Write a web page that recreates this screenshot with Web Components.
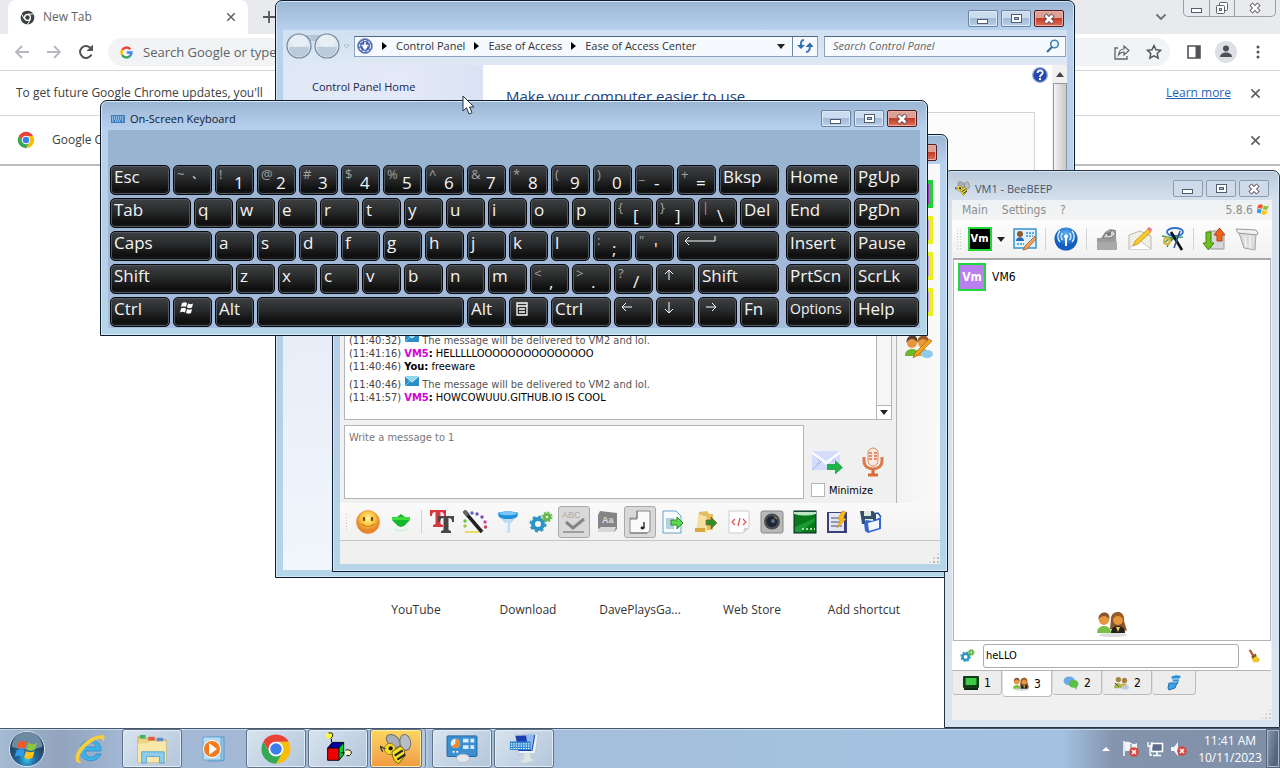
<!DOCTYPE html>
<html lang="en">
<head>
<meta charset="utf-8">
<title>Desktop</title>
<style>
  html, body { height: 100%; margin: 0; overflow: hidden; }
  body { font: 12px/16px "Open Sans", "Noto Sans", sans-serif; color: #000; background: #fff; }
</style>
</head>
<body>
<desk-top></desk-top>

<script>
const wheel = (a, b, c) => `
  <g><path fill="${a}" d="M2.5 6.5A11 11 0 0 1 21.5 6.5H12A5.5 5.5 0 0 0 7.2 14.8Z"/>
  <path fill="${b}" transform="rotate(120 12 12)" d="M2.5 6.5A11 11 0 0 1 21.5 6.5H12A5.5 5.5 0 0 0 7.2 14.8Z"/>
  <path fill="${c}" transform="rotate(240 12 12)" d="M2.5 6.5A11 11 0 0 1 21.5 6.5H12A5.5 5.5 0 0 0 7.2 14.8Z"/></g>`;

const flag = `
  <path fill="#f2592a" d="M2 4c3-2 6-2 9 0l-2 7c-3-2-6-2-9 0z"/>
  <path fill="#8cc63f" d="M12.5 4.5c3 2 6 2 9 0l-2 7c-3 2-6 2-9 0z"/>
  <path fill="#2f9be8" d="M0 12.5c3-2 6-2 8.5 0l-2 7c-3-2-5.5-2-8.5 0z"/>
  <path fill="#fcc419" d="M10 13c3 2 6 2 9 0l-2 7c-3 2-6 2-9 0z"/>`;

const person = (x, shirt, hair) => `
  <g transform="translate(${x} 0)"><path fill="${shirt}" d="M0 22c0-5 3-7 7-7s7 2 7 7z"/>
  <circle cx="7" cy="9" r="5" fill="#e8963e"/><path fill="${hair}" d="M1.5 9C1 4 4 1.5 7.5 1.5S13 4 12.5 9C11 6 9 5 7 5S3 6 1.5 9z"/></g>`;

const gears = `
  <circle cx="9" cy="14" r="5" fill="none" stroke="#2b95c4" stroke-width="4"/>
  <circle cx="9" cy="14" r="7.5" fill="none" stroke="#2b95c4" stroke-width="2" stroke-dasharray="3 2.900"/>
  <circle cx="18" cy="7" r="2.8" fill="none" stroke="#63b54e" stroke-width="3"/>
  <circle cx="18" cy="7" r="4.600" fill="none" stroke="#7ac05e" stroke-width="2" stroke-dasharray="2 1.600"/>`;

const bee = `
  <ellipse cx="10" cy="6" rx="6" ry="4" transform="rotate(40 10 6)" fill="#a9adb5" stroke="#6a6d74" stroke-width=".7"/>
  <ellipse cx="19" cy="7" rx="4" ry="6" transform="rotate(-10 19 7)" fill="#b9bcc3" stroke="#6a6d74" stroke-width=".7"/>
  <circle cx="7.5" cy="12" r="4.200" fill="#f4dc2c" stroke="#9a7c18" stroke-width=".7"/>
  <path d="M9 14l6-4c4 1 4 6 3 8l-4 5c-3-1-5-5-5-9z" fill="#f4dc2c" stroke="#665518" stroke-width=".7"/>
  <path d="M11 17l6-4M13 20l6-4" stroke="#222" stroke-width="1.600"/>
  <circle cx="8" cy="11.5" r="1.600" fill="#111"/><path d="M4 12l-4-2 2 4" fill="none" stroke="#333"/>`;

// name: [viewBox, markup]
const ICONS = {
  chrome: ["0 0 24 24", wheel("#ea4335", "#fbbc05", "#34a853") + `<circle cx="12" cy="12" r="5.5" fill="#fff"/><circle cx="12" cy="12" r="4.300" fill="#3b7ded"/>`],
  "chrome-mono": ["0 0 24 24", wheel("#3c4043", "#3c4043", "#3c4043") + `<path stroke="#fff" stroke-width="1.5" d="M12 6.5h9.5M7.2 14.8L2.5 6.5M16.8 14.8L12 23"/><circle cx="12" cy="12" r="5.5" fill="#fff"/><circle cx="12" cy="12" r="3.600" fill="#3c4043"/>`],
  google: ["0 0 24 24", `<g fill="none" stroke-width="4.400"><path stroke="#ea4335" d="M19 6A9.3 9.3 0 0 0 4.2 7.2"/><path stroke="#fbbc05" d="M4.2 7.2a9.3 9.3 0 0 0 0 9.600"/><path stroke="#34a853" d="M4.2 16.8A9.3 9.3 0 0 0 18 19"/><path stroke="#4285f4" d="M18 19a9 9 0 0 0 3.2-7H12.5"/></g>`],
  close: ["0 0 12 12", `<path d="M1.5 1.5l9 9M10.5 1.5l-9 9" stroke="#5a5d61" stroke-width="1.700"/>`],
  plus: ["0 0 12 12", `<path d="M6 0v12M0 6h12" stroke="#55585c" stroke-width="1.800"/>`],
  back: ["0 0 16 16", `<path d="M15 8H2M8 2L2 8l6 6" fill="none" stroke="#b5b8bc" stroke-width="1.800"/>`],
  forward: ["0 0 16 16", `<path d="M1 8h13M8 2l6 6-6 6" fill="none" stroke="#b5b8bc" stroke-width="1.800"/>`],
  reload: ["0 0 16 16", `<path d="M13.5 10.5A6 6 0 1 1 13 4.5" fill="none" stroke="#505357" stroke-width="2"/><path d="M15 .5V7H8.5z" fill="#505357"/>`],
  chevron: ["0 0 12 8", `<path d="M1.5 1.5L6 6l4.5-4.5" fill="none" stroke="#6b6e73" stroke-width="1.800"/>`],
  share: ["0 0 16 16", `<path d="M4 4H1v11h12v-3" fill="none" stroke="#5f6368" stroke-width="1.300"/><path d="M4.5 11C5 7 7 5 10 5V2l5 4.5-5 4.5V8C7.5 8 6 9 4.5 11z" fill="none" stroke="#5f6368" stroke-width="1.200"/>`],
  star: ["0 0 16 16", `<path d="M8 1.500l2 4.300 4.700.5-3.500 3.200 1 4.700L8 11.800l-4.200 2.400 1-4.700L1.300 6.300l4.700-.5z" fill="none" stroke="#505357" stroke-width="1.400"/>`],
  panel: ["0 0 16 16", `<path d="M2 2h12v12H2z" fill="none" stroke="#505357" stroke-width="1.600"/><path d="M9.5 2H14v12H9.5z" fill="#505357"/>`],
  profile: ["0 0 22 22", `<circle cx="11" cy="11" r="11" fill="#dde1e6"/><circle cx="11" cy="7.5" r="3" fill="#4d5156"/><path d="M5 16c0-3 3-4.500 6-4.500s6 1.500 6 4.500z" fill="#4d5156"/>`],
  dots: ["0 0 4 16", `<g fill="#505357"><circle cx="2" cy="3" r="1.500"/><circle cx="2" cy="8" r="1.500"/><circle cx="2" cy="13" r="1.500"/></g>`],
  min: ["0 0 14 12", `<rect x="1.5" y="6.5" width="10" height="4" fill="#fff" stroke="#4e5d72"/>`],
  max: ["0 0 14 12", `<rect x="2.5" y="1.5" width="10" height="8" fill="#fff" stroke="#4e5d72"/><rect x="5.5" y="4.5" width="4" height="2" fill="#a9c0da" stroke="#4e5d72"/>`],
  restore: ["0 0 14 14", `<rect x="4.5" y="1.5" width="8" height="8" rx="1" fill="#fff" stroke="#5b606a"/><rect x="1.5" y="4.5" width="8" height="8" rx="1" fill="#fff" stroke="#5b606a"/><rect x="4.5" y="7.5" width="2" height="2" fill="none" stroke="#5b606a"/>`],
  cross: ["0 0 14 12", `<path d="M3 2l8 8M11 2l-8 8" stroke="#5c4650" stroke-width="4.400"/><path d="M3.5 2.5l7 7M10.5 2.5l-7 7" stroke="#fff" stroke-width="2.600"/>`],
  kbd: ["0 0 14 8", `<rect width="14" height="8" fill="#3c7fc0"/><path d="M1 2h12M1 4h12M1 6h2M11 6h2M4 6h6" stroke="#d6ecff" stroke-width="1" stroke-dasharray="1.200 .8"/>`],
  orbnav: ["0 0 66 28", `<path d="M14 3h28v6H14z" fill="#b4c6d8"/><g stroke="#75879a" stroke-width="1.200" fill="#dce6ef"><circle cx="14" cy="14" r="12"/><circle cx="42" cy="14" r="12"/></g><g fill="#bccada"><path d="M4 15h20a10 10 0 0 1-20 0zM32 15h20a10 10 0 0 1-20 0z"/></g><g fill="#edf3f8" opacity=".7"><ellipse cx="14" cy="9" rx="9" ry="6"/><ellipse cx="42" cy="9" rx="9" ry="6"/></g><path d="M59 13h5l-2.500 3z" fill="#fff" stroke="#a9b8c8"/>`],
  ease: ["0 0 16 16", `<circle cx="8" cy="8" r="7.5" fill="#4461ad" stroke="#8d9cc0"/><circle cx="8" cy="8" r="5.5" fill="none" stroke="#dfe8ff" stroke-width="1.200" stroke-dasharray="3 1"/><path d="M8 4v6M4.5 7.5h7M6 8.5l2 2.500 2-2.500" fill="none" stroke="#fff" stroke-width="1.600"/>`],
  tri: ["0 0 5 8", `<path d="M0 0l5 4-5 4z" fill="#000"/>`],
  caret: ["0 0 8 5", `<path d="M0 0h8L4 5z" fill="#222"/>`],
  scrollup: ["0 0 8 5", `<path d="M0 5h8L4 0z" fill="#444"/>`],
  refresh: ["0 0 16 14", `<path d="M7 1C4 1 4 3 4 6M9 13c3 0 4-2 4-6" fill="none" stroke="#3a78b8" stroke-width="2"/><path d="M0 6h8L4 10zM8.5 8h8L13 3.500z" fill="#2f6fae"/>`],
  search: ["0 0 14 14", `<circle cx="8.5" cy="5" r="3.800" fill="#eaf6ff" stroke="#4383ad" stroke-width="1.600"/><path d="M6 8l-5 5" stroke="#376f99" stroke-width="2.200"/>`],
  pointer: ["0 0 14 21", `<path d="M1 1v15l3.500-3.300L7 19l3-1.300L7.500 12H12z" fill="#fff" stroke="#26303c"/>`],
  smiley: ["0 0 24 24", `<defs><radialGradient id="g" cy=".35"><stop offset="0" stop-color="#fff3a0"/><stop offset=".6" stop-color="#fbc43c"/><stop offset="1" stop-color="#e8862b"/></radialGradient></defs><circle cx="12" cy="12" r="11.500" fill="url(#g)" stroke="#e28a3a" stroke-width=".6"/><ellipse cx="8" cy="9" rx="1.200" ry="2.200" fill="#6b4a12"/><ellipse cx="16" cy="9" rx="1.200" ry="2.200" fill="#6b4a12"/><path d="M5.500 14q6.500 5 13 0" fill="none" stroke="#c98224" stroke-width="1.200"/>`],
  greendown: ["0 0 24 24", `<path d="M3 7h5l4-3 4 3h5v3l-6 6-3 1-3-1-6-6z" fill="#13b82c"/><path d="M3 7h18v3H3z" fill="#3fdc3f"/><path d="M5 18q7 3 14 0v2q-7 3-14 0z" fill="#d9f0d9"/>`],
  font: ["0 0 24 24", `<path d="M0 0h16v6h-2c0-3-1-4-3.500-4v12l2.500 1v2H3v-2l2.500-1V2C3 2 2 3 2 6H0z" fill="#d9373d"/><path d="M8 6h16v6h-2c0-3-1-4-3.500-4v12l2.500 1v2H11v-2l2.500-1V8C11 8 10 9 10 12H8z" fill="#4b4547"/>`],
  wand: ["0 0 24 24", `<path d="M1 1l18 21" stroke="#222" stroke-width="3.500"/><path d="M1 1l4 4" stroke="#666" stroke-width="4"/><g><circle cx="9" cy="3" r="1.700" fill="#5663c8"/><circle cx="14" cy="4" r="1.700" fill="#6a4fc0"/><circle cx="19" cy="7" r="1.700" fill="#8447b4"/><circle cx="22" cy="12" r="1.700" fill="#c44aa8"/><circle cx="22.500" cy="17" r="1.700" fill="#cf3d60"/><circle cx="2" cy="11" r="1.700" fill="#68c23a"/><circle cx="2" cy="16" r="1.700" fill="#9ccc3c"/></g><path d="M2 22h14" stroke="#e0d53a" stroke-width="1.500"/>`],
  funnel: ["0 0 24 24", `<path d="M2 3c3-2 17-2 20 0v3l-8 8v8l-4 1v-9L2 6z" fill="#bcdcf4"/><path d="M2 3c3-2 17-2 20 0l-1 4-5 2H8L3 7z" fill="#1e8fdc"/><ellipse cx="12" cy="3.500" rx="9" ry="1.800" fill="#79c5f5"/><path d="M11 12v10" stroke="#edf7ff" stroke-width="1.500"/>`],
  gears: ["0 0 24 24", gears],
  spell: ["0 0 24 24", `<text x="0" y="8" font-family="Liberation Sans" font-size="9" fill="#aaa">ABC</text><path d="M4 12l7 6 11-9" fill="none" stroke="#858585" stroke-width="3"/><path d="M1 22h21" stroke="#8a8a8a" stroke-width="1.500"/>`],
  book: ["0 0 24 24", `<path d="M5 1l17 2v16l-3 3H3V5z" fill="#858585"/><path d="M3 19l3-2h15l-2 5H3z" fill="#d8d8d8"/><text x="7" y="13" font-family="Liberation Sans" font-weight="bold" font-size="9" fill="#ddd">Aa</text>`],
  notepage: ["0 0 24 24", `<path d="M9 1h13v20l-3 2H2V8h7z" fill="#fafafa" stroke="#888"/><path d="M9 1v8H2" fill="none" stroke="#777"/><path d="M16 12v6" stroke="#222" stroke-width="1.300"/><ellipse cx="14.500" cy="18" rx="2" ry="1.400" fill="#222"/><path d="M2 23h17" stroke="#777"/>`],
  sendfile: ["0 0 24 24", `<path d="M2 1h13l5 5v17H2z" fill="#f5fbff" stroke="#6ba0c8"/><path d="M5 8h8v11H5z" fill="#b8cfe0"/><path d="M10 10h6V7l6 6-6 6v-4h-6z" fill="#5fd850" stroke="#2b8b2b"/>`],
  sendfolder: ["0 0 24 24", `<path d="M5 2l8-1 2 3h4v16H3z" fill="#e3bd62"/><path d="M3 20L5 4l8 3v16z" fill="#f6e0a0"/><path d="M1 18h10v4H1z" fill="#d9a83c"/><path d="M12 10h5V7l6 6-6 6v-4h-5z" fill="#2f8f2b" stroke="#8a5a20" stroke-width=".6"/>`],
  code: ["0 0 24 24", `<path d="M2 1h20v17l-6 5H2z" fill="#fff" stroke="#ccc"/><path d="M22 18h-5l-1 5z" fill="#d4d4d4"/><path d="M8 9l-3 3 3 3M16 9l3 3-3 3M13 8l-2 8" fill="none" stroke="#e05050" stroke-width="1.200"/>`],
  camera: ["0 0 24 24", `<rect x="1" y="1" width="22" height="22" rx="2" fill="#b8b8b8" stroke="#888"/><circle cx="12" cy="11.500" r="8" fill="#4a4d52"/><circle cx="12" cy="11.500" r="5.500" fill="#1c2533"/><circle cx="13" cy="11" r="2" fill="#5f6c86"/><path d="M14 7l3 2" stroke="#c9a35a"/>`],
  screen: ["0 0 24 24", `<rect x="1" y="1" width="22" height="22" fill="#087a1c" stroke="#123"/><path d="M1 2h22v2q-11 3-22 0z" fill="#bfe6c4"/><path d="M2 17Q12 13 22 8v3Q14 16 8 22H2z" fill="#1c9a34"/><path d="M9 19h13" stroke="#a8e0a8" stroke-width="2" stroke-dasharray="2 2"/>`],
  savenote: ["0 0 24 24", `<rect x="1" y="2" width="20" height="21" fill="#39417c"/><rect x="3" y="3" width="15" height="18" fill="#e4e7ef"/><path d="M5 8h9M5 12h11M5 16h11" stroke="#777fa6" stroke-width="1.300"/><path d="M16 1l4 1-3 6 3 1-9 9 3-8-2-1z" fill="#fbb81e" stroke="#d98a12" stroke-width=".6"/>`],
  disks: ["0 0 24 24", `<path d="M1 1h13l3 3v10H3z" fill="#344f6a"/><path d="M5 1h7v5H5zM6 9h8v5H6z" fill="#dfe9df"/><path d="M5 13l2-3 6 1 9-4v12l-13 4-3-2z" fill="#3465d0"/><path d="M9 13l11-3v8l-10 3z" fill="#f2f6ff"/><path d="M14 4l5-1 3 4" fill="none" stroke="#27509f" stroke-width="1.500"/>`],
  envelope: ["0 0 14 10", `<rect width="14" height="10" fill="#2b8ec7"/><path d="M0 0l7 6 7-6" fill="#8fd4f2" stroke="#d9f3ff"/><path d="M0 10l5-5" stroke="#7cc5e8"/>`],
  send: ["0 0 32 26", `<path d="M1 2h28v19H1z" fill="#d3dcfa"/><path d="M1 2l14 10L29 2v3L15 16 1 5z" fill="#f8faff"/><path d="M1 21l10-9M6 9l3 3-3 3M24 9l-3 3" fill="none" stroke="#a8b4ec"/><path d="M16 15h8v-4l8 7.500-8 7V21h-8z" fill="#20b14c"/>`],
  mic: ["0 0 22 30", `<rect x="6" y="1" width="10" height="18" rx="5" fill="#fbe9df" stroke="#d68a5f"/><path d="M7 6h3M7 9h3M7 12h3M12 6h3M12 9h3M12 12h3" stroke="#e06a4a" stroke-width="1.300"/><path d="M2 10v4c0 5 4 8 9 8s9-3 9-8v-4" fill="none" stroke="#dc7a48" stroke-width="3"/><path d="M11 22v5M6 28h10" stroke="#dc6a34" stroke-width="3"/>`],
  group: ["0 0 28 24", person(0, "#6cba2c", "#5d4330") + person(11, "#e2a02c", "#9c5b26") + `<ellipse cx="22" cy="20" rx="6" ry="4" fill="#8ccbec"/><path d="M24 5L10 19l-2 5 5-3L27 7z" fill="#f6a21c" stroke="#8a5a10" stroke-width=".6"/>`],
  couple: ["0 0 30 26", `<ellipse cx="16" cy="24" rx="14" ry="2" fill="#ddd"/><path d="M14 8c0-9 14-10 13 2l3 10-6-2H13z" fill="#8a5428"/>` + person(14, "#26201c", "#9a6028") + person(0, "#7bbf4a", "#8a5430") + `<path d="M19 16l2 5 2-5z" fill="#f0d050"/>`],
  winflag: ["0 0 22 22", flag],
  vcard: ["0 0 24 24", `<rect x="1" y="2" width="22" height="19" fill="#dff1fc" stroke="#3d93cc" stroke-width="1.500"/><circle cx="7" cy="7" r="3" fill="#8a5a2c"/><path d="M3 14c0-5 8-5 8 0z" fill="#2367b5"/><path d="M13 6h8M13 9h7M4 17h7" stroke="#3d93cc" stroke-width="1.500" stroke-dasharray="2 1"/><path d="M22 9L12 19l-2 4 4-1 9-10z" fill="#f0a55c" stroke="#9c5c32" stroke-width=".8"/>`],
  radio: ["0 0 24 24", `<defs><radialGradient id="g" cy=".3"><stop offset="0" stop-color="#65b6f4"/><stop offset="1" stop-color="#125fc0"/></radialGradient></defs><circle cx="12" cy="12" r="11.500" fill="url(#g)"/><circle cx="12" cy="9.500" r="2" fill="#fff"/><path d="M12 11v8" stroke="#fff" stroke-width="2"/><path d="M8.500 13a5 5 0 0 1 0-7M15.500 13a5 5 0 0 0 0-7M6 15a8 8 0 0 1 0-11M18 15a8 8 0 0 0 0-11" fill="none" stroke="#eaf5ff" stroke-width="1.300"/>`],
  puzzle: ["0 0 24 24", `<path d="M2 11h4l4-6 5-3 6 1v7l1 13H2z" fill="#9b9b9b"/><path d="M2 15h20v8H2z" fill="#a9a9a9"/><path d="M8 11l3-5 3 2 3-5 4 4-5 4z" fill="#d4d4d4" stroke="#666" stroke-width=".8"/><circle cx="14" cy="7" r="2" fill="#777"/>`],
  write: ["0 0 24 24", `<path d="M1 8l11-4 11 5v13H1z" fill="#f2f0e4" stroke="#b9b8b0"/><path d="M1 22l10-9 12 9" fill="#fff" stroke="#c5c5bd"/><path d="M20 2L7 14l-2 5 5-2L23 5z" fill="#f7c92e" stroke="#b88a1c" stroke-width=".7"/><path d="M19 2l4 3 1-3-3-2z" fill="#e87480"/>`],
  magic: ["0 0 24 24", `<ellipse cx="14" cy="5" rx="8" ry="4" fill="none" stroke="#2f6fd0" stroke-width="1.800"/><path d="M1 9q10 3 21 1M3 17q4-6 9-5M6 20q2-6 10-11" fill="none" stroke="#3f9e74" stroke-width="1.500"/><path d="M10 5l11 18" stroke="#111" stroke-width="2.600"/><circle cx="6" cy="14" r="3" fill="none" stroke="#ddb52d" stroke-width="2"/><path d="M19 4l-6 17" stroke="#2d4f8d" stroke-width="1.500"/>`],
  transfer: ["0 0 24 24", `<path d="M7 4h12l3 3v15H9z" fill="#d5d7db" stroke="#999"/><path d="M4 5h5v11h3l-5.500 7L1 16h3z" fill="#6fbf1f" stroke="#3e8714"/><path d="M15 14V8h-3l5.500-7L23 8h-3v6z" fill="#f0641c" stroke="#b64312"/>`],
  trash: ["0 0 24 24", `<path d="M4 6h17l-1 17-11-2z" fill="#dcdcdc" stroke="#a5a5a5"/><path d="M1 2l20 1 2 3-1 2L3 6z" fill="#f1f1f1" stroke="#999"/><path d="M10 9l1 11M15 9v12" stroke="#fff"/>`],
  broom: ["0 0 16 16", `<path d="M3 1l5 8" stroke="#b8552f" stroke-width="2.400"/><path d="M5 9l5-2 5 5-2 3H7z" fill="#ecca2e"/><path d="M5 8l5-3 1 3-5 3z" fill="#8b5c22"/>`],
  monitor: ["0 0 16 14", `<rect width="16" height="12" rx="1" fill="#123c18"/><rect x="2.500" y="2" width="11" height="7" fill="#2fc43a"/><path d="M5 2v7M8 2v7M11 2v7" stroke="#7bea7b" stroke-width=".6"/><path d="M1 12h14v2H1z" fill="#0d2a10"/>`],
  bubbles: ["0 0 18 16", `<ellipse cx="7" cy="5.500" rx="6.500" ry="5" fill="#6ba9ea"/><ellipse cx="12" cy="9" rx="5.500" ry="4.500" fill="#5cc046"/><path d="M13 12l2 4 1-5z" fill="#5cc046"/>`],
  crowd: ["0 0 18 16", `<circle cx="6" cy="4" r="3" fill="#9b8a3e"/><circle cx="13" cy="5" r="3" fill="#a88046"/><path d="M1 14c0-8 9-8 9 0z" fill="#a9b84a"/><path d="M8 12c0-5 8-5 8 0z" fill="#c9b13a"/><ellipse cx="14" cy="13" rx="4" ry="2.500" fill="#b8cde6"/><path d="M2 8l4 4" stroke="#333"/>`],
  scroll: ["0 0 16 16", `<path d="M5 2q4-3 10-1l-2 3-1 5H5l2-4z" fill="#2f8fd8"/><path d="M3 8h8l-2 5-6 2-1-2z" fill="#3ba0e4" stroke="#2470b0"/><path d="M7 4h6M6 7h5" stroke="#bfe6ff"/>`],
  help: ["0 0 16 16", `<circle cx="8" cy="8" r="7.300" fill="#2747b0" stroke="#8fa5c8" stroke-width="1.300"/><path d="M5.500 6c0-3.500 5.500-3.200 5.200 0C10.500 7.800 8 8 8 10" fill="none" stroke="#fff" stroke-width="1.900"/><circle cx="8" cy="12" r="1.200" fill="#fff"/>`],
  bee: ["0 0 24 24", bee],
  start: ["0 0 40 40", `<defs><radialGradient id="g" cy=".8"><stop offset="0" stop-color="#39c4f0"/><stop offset=".5" stop-color="#22679b"/><stop offset="1" stop-color="#234766"/></radialGradient></defs><circle cx="20" cy="20" r="18.500" fill="url(#g)" stroke="#dfe9f2"/><path d="M4 18a16 16 0 0 1 32 0q-16 5-32 0z" fill="#a9c2d6" opacity=".55"/><g transform="translate(9 9)">${flag}</g>`],
  ie: ["0 0 32 32", `<path d="M27 18H11c0 7 9 8 11 3h5C24 31 6 30 6 17 6 4 28 3 27 18zM11 14h11c0-6-11-6-11 0z" fill="#3db3ea" stroke="#2486c4" stroke-width=".7"/><path d="M3 29C-3 22 12 2 29 2c3 1 1 5 0 7 0-5-4-4-9-1C10 13 5 22 5 26c0 2 1 3 3 2-1 2-3 3-5 1z" fill="#f7ce3c"/>`],
  explorer: ["0 0 34 32", `<path d="M2 3h8l2 3h20v24H2z" fill="#edd586" stroke="#c6a94e"/><path d="M4 1h6v4H4z" fill="#3fb264"/><path d="M13 3h7v4h-7z" fill="#e35b42"/><path d="M22 4h7v4h-7z" fill="#5a90d8"/><path d="M2 10h11l2-2h17v22H2z" fill="#f8e9ab"/><path d="M6 19h24v12h-5v-7H11v7H6z" fill="#8fcdec" stroke="#5aa5cf"/>`],
  wmp: ["0 0 32 32", `<path d="M11 4h15v23l-3 1H11z" fill="#8fc4ea" stroke="#5a96c8"/><rect x="5" y="4" width="18" height="23" fill="#b8dbf2" stroke="#6aa6d4"/><circle cx="14" cy="16" r="8.500" fill="#f07a1c" stroke="#fff"/><path d="M11 10l8 6-8 6z" fill="#fff"/>`],
  cube: ["0 0 34 36", `<path d="M6 17l5-6h12l-5 6z" fill="#00a"/><path d="M23 11v13l-5 6V17z" fill="#0c3"/><path d="M6 17h12v13H6z" fill="#e00"/><path d="M6 17h12v13H6zM6 17l5-6h12l-5 6M23 11v13l-5 6M10 11V7M20 22h4" fill="none" stroke="#000"/><circle cx="8" cy="4" r="3.500" fill="#ff3"/><path d="M7 1q6-1 4 4l-2 2" fill="none" stroke="#000"/><circle cx="28" cy="22" r="3.500" fill="#ffc"/><path d="M25 19q7-1 6 4-1 3-5 2" fill="none" stroke="#000"/>`],
  cpanel: ["0 0 34 32", `<rect x="1" y="2" width="32" height="22" rx="1" fill="#3b8fd0" stroke="#2367a0"/><circle cx="10" cy="10" r="5" fill="#d9edfb"/><path d="M10 10V5a5 5 0 1 1-4 8z" fill="#f08a2c"/><path d="M18 7h6M26 7h4M18 14h6M26 14h4" stroke="#d4ecff" stroke-width="4"/><path d="M7 19h8" stroke="#fff" stroke-width="2" stroke-dasharray="2 2"/><ellipse cx="18" cy="26" rx="7" ry="4.500" fill="#e3e6ea" stroke="#b9bec5"/>`],
  oskapp: ["0 0 34 34", `<path d="M8 2l24-1-3 21H11z" fill="#eef3f8" stroke="#b7c2cf"/><path d="M8 3l21-1-3 17H11z" fill="#1b3fae"/><path d="M19 2l9-1-3 18-4-5z" fill="#8fb8ee"/><rect x="2" y="9" width="22" height="9" fill="#2c86cc"/><path d="M3 11.500h20M3 14h20M3 16.500h20" stroke="#e8f6ff" stroke-width="1.200" stroke-dasharray="1.600 1"/><path d="M17 22l6-1 1 6 4 2-10 3-5-2 4-2z" fill="#dfe3e4"/>`],
  trayup: ["0 0 8 5", `<path d="M0 5h8L4 1z" fill="#fff"/>`],
  trayflag: ["0 0 18 18", `<path d="M2 1v15" stroke="#fff" stroke-width="1.500"/><path d="M3 2q3-1 6 1t6 0v8H3z" fill="#f2f4f8"/><path d="M9 4v6" stroke="#68748c"/><circle cx="12" cy="12" r="4.800" fill="#d9463c"/><path d="M10 10l4 4M14 10l-4 4" stroke="#fff" stroke-width="1.500"/>`],
  traynet: ["0 0 18 18", `<rect x="5.500" y="3.500" width="11" height="8" fill="#5d6c88" stroke="#fff" stroke-width="1.500"/><path d="M11 12v3M7 15.500h8" stroke="#fff" stroke-width="1.500"/><path d="M2 2v4h4V2M4 6v9h2" fill="none" stroke="#fff" stroke-width="1.300"/>`],
  traysound: ["0 0 18 18", `<path d="M1 7h3l4-5v14l-4-5H1z" fill="#f2f4f8"/><circle cx="12" cy="11" r="4.800" fill="#d9463c"/><path d="M10 9l4 4M14 9l-4 4" stroke="#fff" stroke-width="1.500"/>`],
  keywin: ["0 0 22 22", `<g fill="#fff"><path d="M5 5c2-1 3-1 5 0l-1 4c-2-1-3-1-5 0z"/><path d="M11 5.500c2 1 3 1 5 0l-1 4c-2 1-3 1-5 0z"/><path d="M4 10.500c2-1 3-1 5 0l-1 4c-2-1-3-1-5 0z"/><path d="M10 11c2 1 3 1 5 0l-1 4c-2 1-3 1-5 0z"/></g>`],
  keymenu: ["0 0 12 14", `<path d="M1 1h10v12H1zM1 4h10M3 7h6M3 10h6" fill="none" stroke="#fff" stroke-width="1.300"/>`],
  keyenter: ["0 0 32 10", `<path d="M31 0v5H1M5 1L1 5l4 4" fill="none" stroke="#fff"/>`],
  keyleft: ["0 0 12 12", `<path d="M11 5H1M5 1L1 5l4 4" fill="none" stroke="#fff"/>`],
  keyright: ["0 0 12 12", `<path d="M1 5h10M7 1l4 4-4 4" fill="none" stroke="#fff"/>`],
  keyup: ["0 0 12 12", `<path d="M6 11V1M2 5l4-4 4 4" fill="none" stroke="#fff"/>`],
  keydown: ["0 0 12 12", `<path d="M6 0v11M2 7l4 4 4-4" fill="none" stroke="#fff"/>`],
};

class UiIcon extends HTMLElement {
  connectedCallback() {
    const [box, markup] = ICONS[this.getAttribute("name")];
    const [, , w, h] = box.split(" ").map(Number);
    const size = Number(this.getAttribute("size")) || w;
    this.attachShadow({ mode: "open" }).innerHTML = `
      <style>
        :host { display: block; flex: none; }
        svg { display: block; }
      </style>
      <svg viewBox="${box}" width="${size}" height="${Math.round((size * h) / w)}" aria-hidden="true">${markup}</svg>
    `;
  }
}

// Shared base: a subclass only returns its markup from view().
class UiElement extends HTMLElement {
  connectedCallback() {
    if (this.shadowRoot) return;
    this.attachShadow({ mode: "open" }).innerHTML = `
      <style>
        * { box-sizing: border-box; }
        button, input, textarea { font: inherit; color: inherit; margin: 0; padding: 0; border: 0; background: none; outline: none; }
      </style>
      ${this.view()}
    `;
  }
}

class AeroWindow extends UiElement {
  view() {
    return `
      <style>
        :host {
          display: flex;
          flex-direction: column;
          box-sizing: border-box;
          padding: 0 7px 7px;
          border: 1px solid #0d1c2c;
          border-radius: 7px 7px 0 0;
          background: linear-gradient(#9ab5d3, #b8d1ee 29px, #b6cfe8 60%, #b4d6e8);
          box-shadow: inset 0 0 0 1px #d5e8f6;
        }
        :host([inactive]) {
          background: linear-gradient(#b9c9da, #d5e0ec 28px, #d9e4f0);
          border-color: #26323f;
        }
        header { display: flex; align-items: center; flex: none; height: 29px; padding: 6px 3px 0; gap: 5px; }
        .title { flex: 1; font-size: 11px; white-space: nowrap; color: #0d1c33; }
        :host([inactive]) .title { color: #46566b; }
        .caption { display: flex; gap: 3px; }
        button {
          display: grid;
          place-items: center;
          width: 30px;
          height: 17px;
          border: 1px solid #6a83a3;
          border-radius: 2px;
          background: linear-gradient(#cbdcee 45%, #a2bad5 50%, #b9d0e8);
          box-shadow: inset 0 0 0 1px #dceafa;
        }
        .close { border-color: #541b22; background: linear-gradient(#dba196 45%, #c43c2b 50%, #dc7355); box-shadow: inset 0 0 0 1px #eab2a6; }
        :host([inactive]) button { background: #cfdbe8; border-color: #8c9db2; box-shadow: none; }
        main { flex: 1; min-height: 0; display: flex; flex-direction: column; }
      </style>
      <header>
        <slot name="icon"></slot>
        <span class="title">${this.getAttribute("label") || ""}</span>
        <div class="caption">
          <button aria-label="Minimize"><ui-icon name="min"></ui-icon></button>
          <button aria-label="Maximize"><ui-icon name="max"></ui-icon></button>
          <button class="close" aria-label="Close"><ui-icon name="cross"></ui-icon></button>
        </div>
      </header>
      <main><slot></slot></main>
    `;
  }
}

class ChromeBrowser extends UiElement {
  view() {
    const links = ["YouTube", "Download", "DavePlaysGa...", "Web Store", "Add shortcut"];
    return `
      <style>
        :host { display: flex; flex-direction: column; background: #fff; color: #3c4043; font-size: 13px; }
        .strip { display: flex; height: 34px; padding-left: 8px; background: #e8eaed; }
        .tab { display: flex; align-items: center; gap: 8px; width: 240px; padding: 0 12px; border-radius: 8px 8px 0 0; background: #fff; color: #5f6368; font-size: 12px; }
        .tab span { flex: 1; }
        .new { margin-left: 15px; }
        .chev { margin-left: auto; margin-right: 16px; }
        .caption { display: flex; height: 17px; margin-right: 4px; border: 1px solid #9a9fa8; border-top: 0; border-radius: 0 0 5px 5px; }
        .caption button { display: grid; place-items: center; width: 25px; }
        .caption button + button { border-left: 1px solid #9a9fa8; }
        .caption button:last-child { width: 41px; border-left: 1px solid #9a9fa8; }
        .bar { display: flex; align-items: center; height: 37px; padding: 0 20px 0 14px; border-bottom: 1px solid #d5d7da; }
        .nav { display: flex; gap: 16px; margin-right: 14px; }
        .omni { display: flex; flex: 1; align-items: center; gap: 10px; height: 28px; padding: 0 8px 0 12px; border-radius: 14px; background: #f1f3f4; }
        .omni input { flex: 1; color: #5f6368; }
        .omni input::placeholder { color: #5f6368; opacity: 1; }
        .share { margin-right: 6px; }
        .tools { display: flex; align-items: center; margin-left: 16px; }
        .profile { margin: 0 19px 0 13px; }
        .info { display: flex; align-items: center; height: 45px; padding: 0 19px 0 16px; border-bottom: 1px solid #d5d7da; font-size: 12px; }
        .info.second { height: 50px; padding-left: 17px; gap: 17px; border-bottom: 2px solid #b9bbbe; }
        .info span { flex: 1; white-space: nowrap; }
        .info a { margin-right: 19px; color: #2a62b8; }
        .page { flex: 1; display: flex; justify-content: center; padding-top: 436px; color: #333; }
        .page a { width: 112px; color: inherit; text-decoration: none; text-align: center; font-size: 12px; }
      </style>
      <div class="strip">
        <div class="tab">
          <ui-icon name="chrome-mono" size="15"></ui-icon><span>New Tab</span>
          <button aria-label="Close tab"><ui-icon name="close" size="10"></ui-icon></button>
        </div>
        <button class="new" aria-label="New tab"><ui-icon name="plus"></ui-icon></button>
        <button class="chev" aria-label="Search tabs"><ui-icon name="chevron"></ui-icon></button>
        <div class="caption">
          <button aria-label="Minimize"><ui-icon name="min"></ui-icon></button>
          <button aria-label="Restore"><ui-icon name="restore"></ui-icon></button>
          <button aria-label="Close"><ui-icon name="cross"></ui-icon></button>
        </div>
      </div>
      <div class="bar">
        <div class="nav">
          <button aria-label="Back"><ui-icon name="back"></ui-icon></button>
          <button aria-label="Forward"><ui-icon name="forward"></ui-icon></button>
          <button aria-label="Reload"><ui-icon name="reload"></ui-icon></button>
        </div>
        <div class="omni">
          <ui-icon name="google" size="13"></ui-icon>
          <input aria-label="Address" placeholder="Search Google or type a URL">
          <button class="share" aria-label="Share"><ui-icon name="share"></ui-icon></button>
          <button aria-label="Bookmark"><ui-icon name="star"></ui-icon></button>
        </div>
        <div class="tools">
          <button aria-label="Side panel"><ui-icon name="panel"></ui-icon></button>
          <button class="profile" aria-label="Profile"><ui-icon name="profile"></ui-icon></button>
          <button aria-label="Menu"><ui-icon name="dots"></ui-icon></button>
        </div>
      </div>
      <div class="info">
        <span>To get future Google Chrome updates, you'll</span>
        <a href="#">Learn more</a>
        <button aria-label="Dismiss"><ui-icon name="close" size="11"></ui-icon></button>
      </div>
      <div class="info second">
        <ui-icon name="chrome" size="18"></ui-icon>
        <span>Google Chrome</span>
        <button aria-label="Dismiss"><ui-icon name="close" size="11"></ui-icon></button>
      </div>
      <div class="page">${links.map((text) => `<a href="#">${text}</a>`).join("")}</div>
    `;
  }
}

class ControlPanel extends UiElement {
  view() {
    return `
      <style>
        :host { display: flex; flex: 1; flex-direction: column; min-height: 0; font-size: 11px; color: #333; }
        .nav { display: flex; align-items: center; height: 35px; padding: 0 1px 3px 2px; background: linear-gradient(#cfe0f0, #dfe9f5); }
        .address, .find { display: flex; align-items: center; height: 21px; border: 1px solid #8ba3bd; border-top-color: #4f6780; background: #f6faff; }
        .address { flex: 1; margin: 0 6px 0 3px; }
        .crumb { display: flex; flex: 1; align-items: center; gap: 9px; padding-left: 2px; }
        .crumb a { color: inherit; text-decoration: none; white-space: nowrap; }
        .crumb .drop { margin: 0 7px 0 auto; }
        .refresh { display: grid; place-items: center; width: 25px; height: 19px; border-left: 1px solid #6d89a8; }
        .find { width: 242px; padding: 0 5px 0 8px; }
        .find input { flex: 1; min-width: 0; font-style: italic; }
        .find input::placeholder { color: #666; opacity: 1; }
        .main { display: flex; flex: 1; min-height: 0; background: #fff; }
        aside { width: 200px; padding: 14px 0 0 29px; background: linear-gradient(rgba(240, 246, 251, 0) 100px, #f0f6fb), linear-gradient(90deg, #e1e8f5, #e3e9f8 60%, #dbe2f3); color: #15264f; }
        aside a { color: inherit; text-decoration: none; }
        section { flex: 1; padding: 20px 13px 0 23px; }
        h1 { margin: 0 0 5px; font-size: 15px; line-height: 22px; font-weight: 400; color: #1c3f86; }
        .box { height: 440px; border: 1px solid #d0d3da; background: #fcfcfd; }
        .help { display: flex; justify-content: flex-end; width: 0; padding: 2px 4px 0 0; }
        .scroll { display: flex; flex-direction: column; align-items: center; width: 15px; background: #f1f1f1; }
        .scroll ui-icon { margin: 7px 0 6px; }
        .scroll i { flex: 1; width: 14px; border: 1px solid #979797; background: linear-gradient(90deg, #f3f3f3, #dcdcdc 50%, #c6c8cb); }
      </style>
      <div class="nav">
        <ui-icon name="orbnav"></ui-icon>
        <div class="address">
          <div class="crumb">
            <ui-icon name="ease"></ui-icon><ui-icon name="tri"></ui-icon><a href="#">Control Panel</a>
            <ui-icon name="tri"></ui-icon><a href="#">Ease of Access</a>
            <ui-icon name="tri"></ui-icon><a href="#">Ease of Access Center</a>
            <button class="drop" aria-label="History"><ui-icon name="caret"></ui-icon></button>
          </div>
          <button class="refresh" aria-label="Refresh"><ui-icon name="refresh"></ui-icon></button>
        </div>
        <div class="find">
          <input aria-label="Search" placeholder="Search Control Panel">
          <ui-icon name="search"></ui-icon>
        </div>
      </div>
      <div class="main">
        <aside><a href="#">Control Panel Home</a></aside>
        <section><h1>Make your computer easier to use</h1><div class="box"></div></section>
        <div class="help"><ui-icon name="help"></ui-icon></div>
        <div class="scroll"><ui-icon name="scrollup"></ui-icon><i></i></div>
      </div>
    `;
  }
}

class ChatRoom extends UiElement {
  view() {
    const tools = ["font", "wand", "funnel", "gears", "spell", "book", "notepage", "sendfile", "sendfolder", "code", "camera", "screen", "savenote", "disks"];
    const pressed = ["spell", "notepage"];
    return `
      <style>
        :host { display: flex; flex: 1; flex-direction: column; min-height: 0; background: #f0f0f0; font: 11px/13px "DejaVu Sans Condensed", "DejaVu Sans", sans-serif; }
        .top { display: flex; flex: 1; min-height: 0; }
        .left { display: flex; flex: 1; flex-direction: column; padding: 0 4px 4px; border-right: 1px solid #b5b5b5; }
        .history { display: flex; flex: 1; min-height: 0; border: 1px solid #b2b5ba; background: #fff; }
        .log { display: flex; flex: 1; flex-direction: column; justify-content: flex-end; padding: 0 4px 15px; color: #000; }
        .log p { margin: 0; height: 13px; white-space: nowrap; }
        .log .note { display: flex; align-items: flex-end; gap: 3px; height: 18px; color: #555; }
        .note ui-icon { margin: 0 0 5px 1px; }
        time { color: #444; }
        .them { color: #d400d4; }
        .scroll { display: flex; flex-direction: column; justify-content: flex-end; width: 15px; border-left: 1px solid #b5b5b5; background: #f6f6f6; }
        .scroll button { display: grid; place-items: center; height: 14px; border-top: 1px solid #b5b5b5; background: #fff; }
        .split { height: 5px; }
        .compose { display: flex; height: 74px; }
        textarea { flex: 1; padding: 5px 4px; border: 1px solid #b2b5ba; background: #fff; resize: none; overflow: hidden; }
        textarea::placeholder { color: #777; opacity: 1; }
        .actions { display: flex; flex-wrap: wrap; align-content: flex-end; align-items: center; justify-content: space-between; width: 88px; padding: 0 8px 2px 7px; row-gap: 6px; }
        label { display: flex; align-items: center; gap: 4px; width: 100%; }
        input[type="checkbox"] { appearance: none; width: 14px; height: 14px; border: 1px solid #b5b5b5; background: #fff; }
        .people { display: flex; flex-direction: column; align-items: center; gap: 8px; width: 43px; padding-top: 16px; background: linear-gradient(90deg, #f3f3f3, #fafafa); }
        .people i { width: 28px; height: 28px; border: 4px solid #e8f020; background: #c8a0e8; }
        .people i:first-child { border-color: #24d038; background: #b030d0; }
        .people button { margin-top: 10px; }
        .tools { display: flex; align-items: center; gap: 1px; height: 38px; padding-left: 5px; border-bottom: 1px solid #c4c4c4; background: linear-gradient(#fafafa, #f1f1f1); }
        .grip { width: 4px; height: 18px; margin-right: 2px; background: radial-gradient(#c5c5c5 40%, transparent 45%) 0 0 / 3px 3px; }
        .tools button { display: grid; place-items: center; width: 32px; height: 32px; border: 1px solid transparent; border-radius: 3px; }
        .tools button[aria-pressed="true"] { border-color: #a9a9a9; background: #d9d9d9; }
        .sep { width: 1px; height: 24px; margin: 0 3px; background: #d4d4d4; }
        .status { display: flex; align-items: flex-end; justify-content: flex-end; height: 23px; }
        .status i { width: 12px; height: 12px; background: radial-gradient(#bbb 30%, transparent 40%) 0 0 / 4px 4px; clip-path: polygon(100% 0, 100% 100%, 0 100%); }
      </style>
      <div class="top">
        <div class="left">
          <div class="history">
            <div class="log">
              <p class="note"><time>(11:40:32)</time><ui-icon name="envelope"></ui-icon>The message will be delivered to VM2 and lol.</p>
              <p><time>(11:41:16)</time> <b class="them">VM5</b><b>:</b> HELLLLLOOOOOOOOOOOOOOO</p>
              <p><time>(11:40:46)</time> <b>You:</b> freeware</p>
              <p class="note"><time>(11:40:46)</time><ui-icon name="envelope"></ui-icon>The message will be delivered to VM2 and lol.</p>
              <p><time>(11:41:57)</time> <b class="them">VM5</b><b>:</b> HOWCOWUUU.GITHUB.IO IS COOL</p>
            </div>
            <div class="scroll"><button aria-label="Scroll down"><ui-icon name="caret"></ui-icon></button></div>
          </div>
          <div class="split"></div>
          <div class="compose">
            <textarea aria-label="Message" placeholder="Write a message to 1" autofocus></textarea>
            <div class="actions">
              <button aria-label="Send"><ui-icon name="send"></ui-icon></button>
              <button aria-label="Record voice"><ui-icon name="mic"></ui-icon></button>
              <label><input type="checkbox">Minimize</label>
            </div>
          </div>
        </div>
        <div class="people">
          <i></i><i></i><i></i><i></i>
          <button aria-label="Edit group"><ui-icon name="group"></ui-icon></button>
        </div>
      </div>
      <div class="tools">
        <div class="grip"></div>
        <button aria-label="Emoticons"><ui-icon name="smiley"></ui-icon></button>
        <button aria-label="Recent emoticons"><ui-icon name="greendown"></ui-icon></button>
        <div class="sep"></div>
        ${tools.map((name) => `<button aria-label="${name}" aria-pressed="${pressed.includes(name)}"><ui-icon name="${name}"></ui-icon></button>`).join("")}
      </div>
      <div class="status"><i></i></div>
    `;
  }
}

class BeeMain extends UiElement {
  view() {
    const tabs = [["monitor", "1"], ["couple", "3"], ["bubbles", "2"], ["crowd", "2"], ["scroll", ""]];
    const button = (name) => `<button aria-label="${name}"><ui-icon name="${name}"></ui-icon></button>`;
    return `
      <style>
        :host { display: flex; flex: 1; flex-direction: column; min-height: 0; background: #f0f0f0; font: 11px/14px "DejaVu Sans Condensed", "DejaVu Sans", sans-serif; }
        .menu { display: flex; align-items: center; gap: 14px; height: 20px; padding: 0 3px 0 10px; background: linear-gradient(#eef1f4, #f3f3f3); color: #8e8e8e; font-size: 12px; }
        .version { display: flex; gap: 4px; margin-left: auto; }
        .tools { display: flex; align-items: center; gap: 1px; height: 38px; padding-left: 4px; background: linear-gradient(#fdfdfd, #f1f1f1); }
        .grip { width: 6px; height: 20px; margin-right: 1px; background: radial-gradient(#c5c5c5 40%, transparent 45%) 0 0 / 3px 3px; }
        .tools button { display: flex; align-items: center; justify-content: center; width: 32px; height: 32px; }
        .tools .user { gap: 5px; width: 44px; }
        .sep { width: 1px; height: 22px; margin: 0 3px; background: #d4d4d4; }
        .vm { display: grid; place-items: center; width: 24px; height: 24px; box-sizing: border-box; border: 2px solid #1fd83a; background: #000; color: #fff; font-weight: bold; }
        .list { display: flex; flex: 1; flex-direction: column; justify-content: space-between; min-height: 0; margin: 0 1px; padding: 3px 4px; border: 1px solid #b2b5ba; border-top: 2px solid #a9a9a9; background: #fff; }
        .contact { display: flex; align-items: center; gap: 6px; font-size: 12px; }
        .contact .vm { width: 28px; height: 28px; background: #bb80f0; }
        .couple { align-self: center; }
        .filter { display: flex; align-items: center; gap: 8px; height: 30px; padding: 0 10px 0 8px; margin-right: 1px; border-bottom: 1px solid #b5b5b5; background: #fff; }
        .filter input { flex: 1; min-width: 0; height: 24px; padding: 0 2px; border: 1px solid #aaa; border-radius: 3px; }
        .tabs { display: flex; align-items: flex-start; font-size: 12px; }
        .tabs button { display: flex; align-items: center; justify-content: center; gap: 5px; width: 50px; height: 24px; border: 1px solid #bbb; border-top: 0; border-left-color: #ddd; border-radius: 0 0 4px 4px; background: #ededed; }
        .tabs .on { height: 26px; background: #fff; }
        .tabs button:last-child { width: 44px; }
        .status { display: flex; align-items: flex-end; justify-content: flex-end; height: 23px; }
        .status i { width: 12px; height: 12px; background: radial-gradient(#ccc 30%, transparent 40%) 0 0 / 4px 4px; clip-path: polygon(100% 0, 100% 100%, 0 100%); }
      </style>
      <div class="menu">
        <span>Main</span><span>Settings</span><span>?</span>
        <div class="version">5.8.6 <ui-icon name="winflag" size="12"></ui-icon></div>
      </div>
      <div class="tools">
        <div class="grip"></div>
        <button class="user"><span class="vm">Vm</span><ui-icon name="caret"></ui-icon></button>
        ${button("vcard")}<div class="sep"></div>
        ${button("radio")}<div class="sep"></div>
        ${button("puzzle")}${button("write")}${button("magic")}<div class="sep"></div>
        ${button("transfer")}${button("trash")}
      </div>
      <div class="list">
        <div class="contact"><span class="vm">Vm</span>VM6</div>
        <ui-icon class="couple" name="couple"></ui-icon>
      </div>
      <div class="filter">
        <ui-icon name="gears" size="15"></ui-icon>
        <input aria-label="Filter users" value="heLLO">
        <ui-icon name="broom" size="14"></ui-icon>
      </div>
      <div class="tabs">
        ${tabs.map(([name, count], i) => `<button class="${i === 1 ? "on" : ""}" aria-label="${name}"><ui-icon name="${name}" size="16"></ui-icon>${count}</button>`).join("")}
      </div>
      <div class="status"><i></i></div>
    `;
  }
}

// [label, column span, shifted symbol or icon name]
const KEY_ROWS = [
  [["Esc", 3], ["`", 2, "~"], ["1", 2, "!"], ["2", 2, "@"], ["3", 2, "#"], ["4", 2, "$"], ["5", 2, "%"], ["6", 2, "^"], ["7", 2, "&amp;"], ["8", 2, "*"], ["9", 2, "("], ["0", 2, ")"], ["-", 2, "_"], ["=", 2, "+"], ["Bksp", 3]],
  [["Tab", 4], ..."qwertyuiop".split("").map((k) => [k, 2]), ["[", 2, "{"], ["]", 2, "}"], ["\\", 2, "|"], ["Del", 2]],
  [["Caps", 5], ..."asdfghjkl".split("").map((k) => [k, 2]), [";", 2, ":"], ["'", 2, '"'], ["", 5, "keyenter"]],
  [["Shift", 6], ..."zxcvbnm".split("").map((k) => [k, 2]), [",", 2, "&lt;"], [".", 2, "&gt;"], ["/", 2, "?"], ["", 2, "keyup"], ["Shift", 4]],
  [["Ctrl", 3], ["", 2, "keywin"], ["Alt", 2], ["", 10], ["Alt", 2], ["", 2, "keymenu"], ["Ctrl", 3], ["", 2, "keyleft"], ["", 2, "keydown"], ["", 2, "keyright"], ["Fn", 2]],
];
const SIDE_KEYS = ["Home", "PgUp", "End", "PgDn", "Insert", "Pause", "PrtScn", "ScrLk", "Options", "Help"];

class OskKey extends UiElement {
  view() {
    const label = this.getAttribute("label") || "";
    const sub = this.getAttribute("sub") || "";
    const icon = this.getAttribute("icon");
    let face = `<span>${label}</span>`;
    if (icon) face = `<ui-icon name="${icon}"></ui-icon>`;
    if (sub) face = `<small>${sub.replace("<", "&lt;")}</small><span class="low">${label}</span>`;
    return `
      <style>
        :host { display: block; }
        button {
          display: flex;
          align-items: flex-start;
          width: 100%;
          height: 30px;
          padding-left: 3px;
          border: 1px solid #05080c;
          border-radius: 5px;
          background: linear-gradient(#3e4042, #28292a 45%, #0e0e0e 85%, #1a1a1a);
          box-shadow: inset 0 0 0 1px #4f5963;
          color: #f4f4f4;
          font-size: 17px;
          line-height: 22px;
        }
        :host([label="Options"]) button { font-size: 14px; }
        small { flex: none; width: 15px; color: #a2a2a2; font-size: 13px; line-height: 17px; text-align: left; }
        .low { padding-top: 6px; }
        ui-icon { margin: 4px 0 0 3px; }
        ui-icon[name="keywin"] { margin: 0; }
      </style>
      <button ${icon ? `aria-label="${icon.slice(3)}"` : ""}>${face}</button>
    `;
  }
}

class OnScreenKeyboard extends UiElement {
  view() {
    const esc = (text) => text.replace('"', "&quot;");
    const key = ([label, span, extra = ""]) => {
      const attr = extra.startsWith("key") ? "icon" : "sub";
      return `<osk-key label="${label}" ${extra ? `${attr}="${esc(extra)}"` : ""} style="grid-column: span ${span}"></osk-key>`;
    };
    return `
      <style>
        :host { display: flex; gap: 7px; padding: 35px 1px 1px 2px; background: linear-gradient(#99b4d1 40px, #9fb5d4 80px, #a5bcdd); }
        .keys, .side { display: grid; gap: 3px; }
        .keys { flex: 1; grid-template-columns: repeat(32, minmax(0, 1fr)); }
        .side { grid-template-columns: 65px 65px; }
      </style>
      <div class="keys">${KEY_ROWS.flat().map(key).join("")}</div>
      <div class="side">${SIDE_KEYS.map((label) => `<osk-key label="${label}"></osk-key>`).join("")}</div>
    `;
  }
}

class TaskBar extends UiElement {
  view() {
    const apps = [["ie", ""], ["explorer", "open"], ["wmp", ""], ["chrome", "open"], ["cube", "open"], ["bee", "open alert"], ["cpanel", "open"], ["oskapp", "open"]];
    return `
      <style>
        :host {
          display: flex;
          box-sizing: border-box;
          height: 40px;
          border-top: 1px solid #46586c;
          background: linear-gradient(90deg, #a5bad3, #91a3bd 60px, #a2b7d3 120px, #a4bfdd 560px, #a4c2e2 83%, #8494ad 87%, #7f8fa8);
          box-shadow: inset 0 1px 0 #c6d8ea;
        }
        .start { width: 54px; margin-right: 6px; display: grid; place-items: center; }
        nav { display: flex; gap: 2px; }
        nav button { display: grid; place-items: center; width: 60px; height: 39px; }
        .open { border: 1px solid #5d7084; border-radius: 3px; background: linear-gradient(135deg, #d8e3ef, #b3c6db); box-shadow: inset 0 0 0 1px #e4eef8; }
        .alert { width: 52px; margin-right: 8px; background: linear-gradient(#fbd75c, #f6b358 60%, #ef9a3c); box-shadow: inset 0 0 0 1px #fff0b0, 3px 0 0 #b7c9dc, 4px 0 0 #6c7f94, 6px 0 0 #b7c9dc; }
        .tray { display: flex; align-items: center; margin-left: auto; color: #fff; }
        .up { margin-right: 12px; }
        .tray > ui-icon { margin-right: 6px; }
        .clock { width: 72px; text-align: center; font-size: 12px; line-height: 17px; }
        .peek { align-self: stretch; width: 14px; border: 1px solid #56657a; background: linear-gradient(100deg, #8b9bb0, #55657d 70%); box-shadow: inset 0 0 0 1px #a8b6c8; }
      </style>
      <button class="start" aria-label="Start"><ui-icon name="start" size="38"></ui-icon></button>
      <nav>${apps.map(([name, state]) => `<button class="${state}" aria-label="${name}"><ui-icon name="${name}" size="32"></ui-icon></button>`).join("")}</nav>
      <div class="tray">
        <button class="up" aria-label="Show hidden icons"><ui-icon name="trayup"></ui-icon></button>
        <ui-icon name="trayflag"></ui-icon><ui-icon name="traynet"></ui-icon><ui-icon name="traysound"></ui-icon>
        <div class="clock">11:41 AM<br>10/11/2023</div>
        <button class="peek" aria-label="Show desktop"></button>
      </div>
    `;
  }
}

class DeskTop extends UiElement {
  view() {
    return `
      <style>
        :host { position: relative; display: flex; flex-direction: column; height: 100vh; overflow: hidden; }
        chrome-browser { flex: 1; min-height: 0; }
        aero-window, .pointer { position: absolute; }
        .cp { left: 275px; top: 0; width: 800px; height: 578px; }
        .bee { left: 944px; top: 170px; width: 336px; height: 558px; }
        .chat { left: 332px; top: 134px; width: 616px; height: 438px; }
        .osk { left: 100px; top: 100px; width: 828px; }
        .pointer { left: 462px; top: 95px; }
      </style>
      <chrome-browser></chrome-browser>
      <task-bar></task-bar>
      <aero-window class="cp"><control-panel></control-panel></aero-window>
      <aero-window class="bee" label="VM1 - BeeBEEP" inactive><ui-icon slot="icon" name="bee" size="15"></ui-icon><bee-main></bee-main></aero-window>
      <aero-window class="chat"><chat-room></chat-room></aero-window>
      <aero-window class="osk" label="On-Screen Keyboard"><ui-icon slot="icon" name="kbd"></ui-icon><on-screen-keyboard></on-screen-keyboard></aero-window>
      <ui-icon class="pointer" name="pointer"></ui-icon>
    `;
  }
}

customElements.define("ui-icon", UiIcon);
customElements.define("aero-window", AeroWindow);
customElements.define("chrome-browser", ChromeBrowser);
customElements.define("control-panel", ControlPanel);
customElements.define("chat-room", ChatRoom);
customElements.define("bee-main", BeeMain);
customElements.define("osk-key", OskKey);
customElements.define("on-screen-keyboard", OnScreenKeyboard);
customElements.define("task-bar", TaskBar);
customElements.define("desk-top", DeskTop);
</script>
</body>
</html>
